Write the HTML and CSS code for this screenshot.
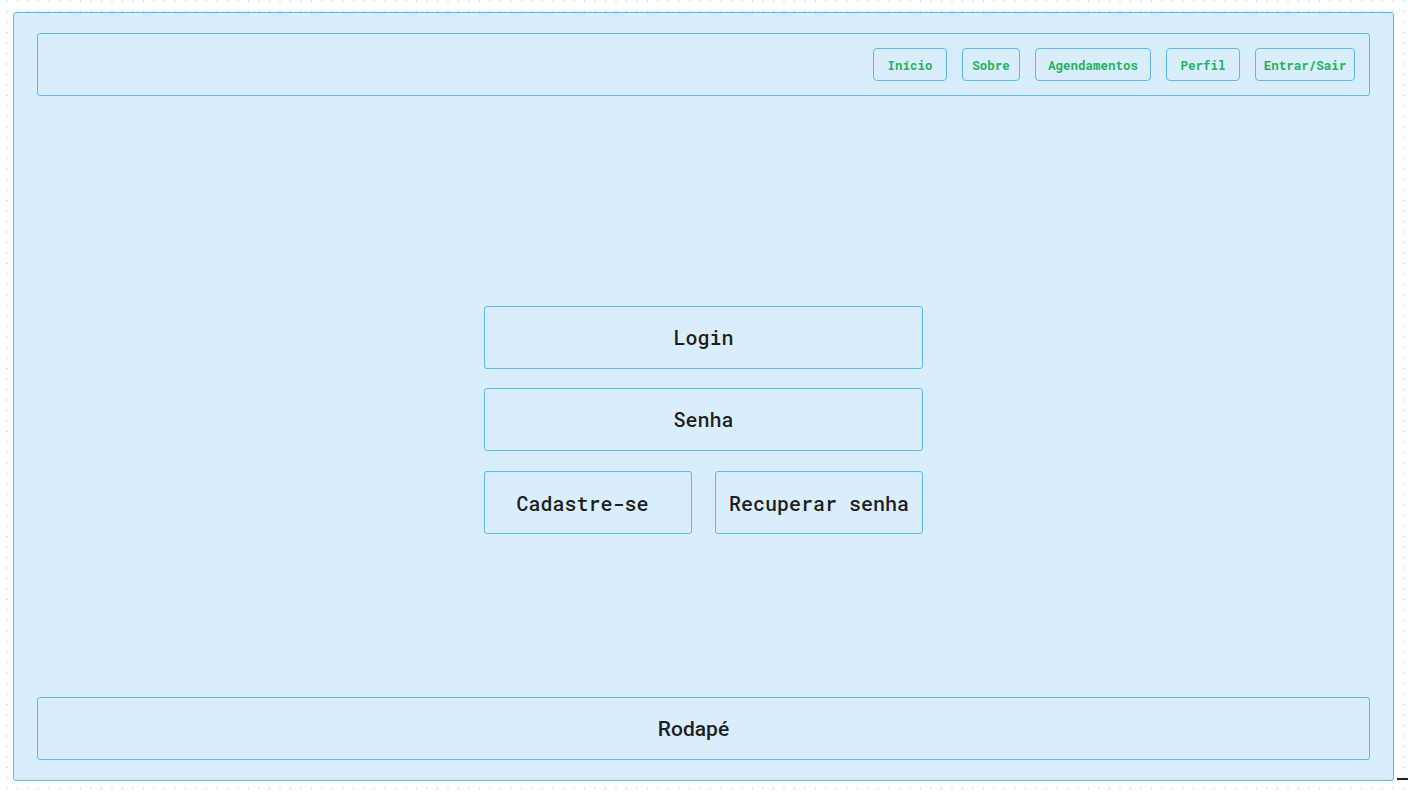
FILE: index.html
```html
<!DOCTYPE html>
<html lang="pt">
<head>
<meta charset="utf-8">
<title>Login</title>
<link rel="stylesheet" href="styles.css">
</head>
<body>
<div class="frame">
  <header class="header">
    <nav class="nav">
      <a class="nav-btn w-inicio">Início</a>
      <a class="nav-btn w-sobre">Sobre</a>
      <a class="nav-btn w-agend">Agendamentos</a>
      <a class="nav-btn w-perfil">Perfil</a>
      <a class="nav-btn w-entrar">Entrar/Sair</a>
    </nav>
  </header>
  <main class="main">
    <div class="form">
      <div class="field">Login</div>
      <div class="field">Senha</div>
      <div class="row">
        <div class="field small pad-left">Cadastre-se</div>
        <div class="field small">Recuperar senha</div>
      </div>
    </div>
  </main>
  <footer class="footer">Rodapé</footer>
</div>
<div class="corner-mark"></div>
</body>
</html>
```
FILE: styles.css
```css
html, body {
  margin: 0;
  padding: 0;
}
body {
  width: 1408px;
  height: 792px;
  position: relative;
  overflow: hidden;
  background-color: #ffffff;
  background-image: radial-gradient(circle, #c9c9c9 0.7px, transparent 1px);
  background-size: 10.5px 10.5px;
  background-position: 1.75px -4.25px;
  font-family: "Roboto Mono", "DejaVu Sans Mono", "Liberation Mono", monospace;
}
.frame {
  position: absolute;
  left: 13px;
  top: 12px;
  width: 1381px;
  height: 769px;
  box-sizing: border-box;
  border: 1px solid #5db6f7;
  border-radius: 3px;
  background: #d9eefc;
  display: flex;
  flex-direction: column;
  padding: 20px 23px 20px 23px;
}
.header {
  height: 63px;
  box-sizing: border-box;
  border: 1px solid #5db6f7;
  border-radius: 3px;
  display: flex;
  align-items: center;
  justify-content: flex-end;
  padding-right: 14px;
}
.nav {
  display: flex;
  gap: 15px;
}
.nav-btn {
  height: 33px;
  box-sizing: border-box;
  border: 1px solid #5db6f7;
  border-radius: 4px;
  display: flex;
  align-items: center;
  justify-content: center;
  color: #22b35e;
  font-family: "Roboto Mono", "DejaVu Sans Mono", monospace;
  font-weight: 700;
  font-size: 12.5px;
  padding-top: 1px;
}
.w-inicio { width: 74px; }
.w-sobre { width: 58px; }
.w-agend { width: 116px; }
.w-perfil { width: 74px; }
.w-entrar { width: 100px; }
.main {
  flex: 1;
  display: flex;
  align-items: center;
  justify-content: center;
}
.form {
  width: 439px;
  display: flex;
  flex-direction: column;
  gap: 19px;
  margin-top: 46px;
}
.field {
  height: 63px;
  box-sizing: border-box;
  border: 1px solid #5db6f7;
  border-radius: 3px;
  display: flex;
  align-items: center;
  justify-content: center;
  font-family: "Roboto Mono", "DejaVu Sans Mono", monospace;
  font-weight: 500;
  font-size: 20px;
  color: #1f1f1f;
}
.row {
  display: grid;
  grid-template-columns: 208px 208px;
  gap: 23px;
  margin-top: 1px;
}
.field.small {
  padding-top: 2px;
}
.field.pad-left {
  padding-right: 11px;
}
.footer {
  height: 63px;
  box-sizing: border-box;
  border: 1px solid #5db6f7;
  border-radius: 3px;
  display: flex;
  align-items: center;
  justify-content: center;
  padding-right: 20px;
  font-family: Roboto, "Noto Sans", sans-serif;
  font-weight: 500;
  font-size: 21px;
  color: #1f1f1f;
}
.corner-mark {
  position: absolute;
  left: 1397px;
  top: 778px;
  width: 11px;
  height: 2px;
  background: #222;
}
```
